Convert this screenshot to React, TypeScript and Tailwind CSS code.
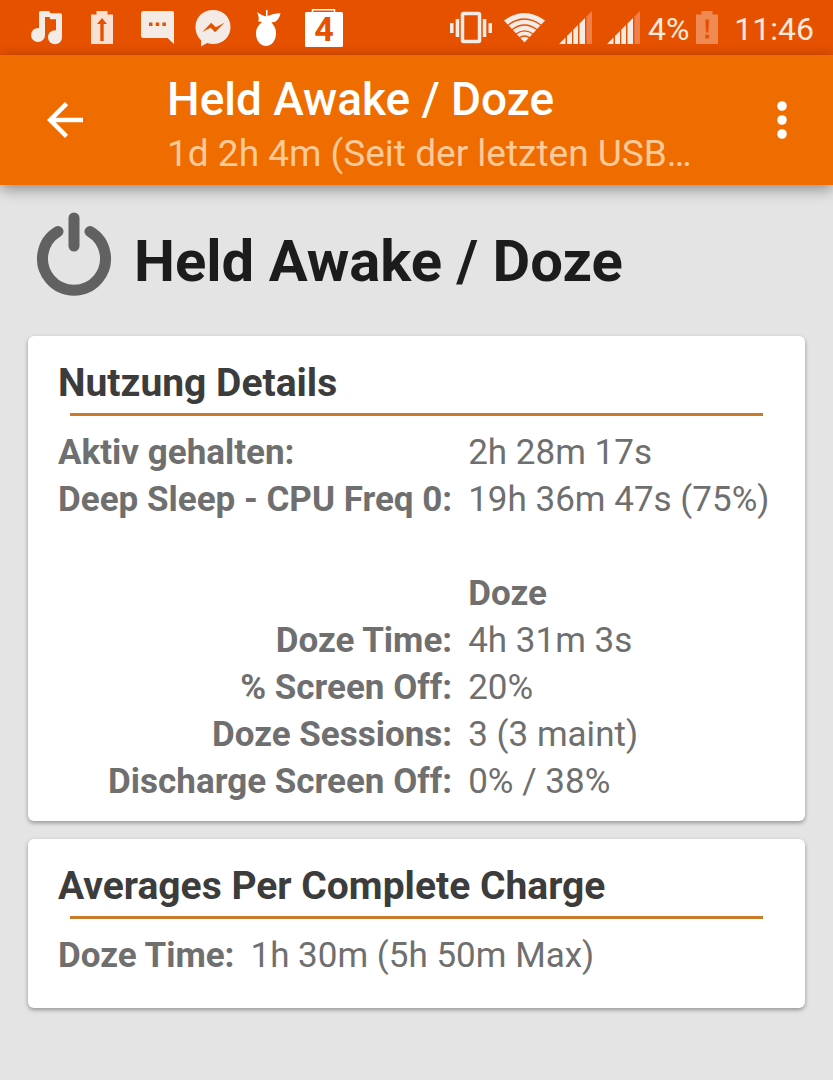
import type { ReactNode } from "react";
import clsx from "clsx";

interface StatusIconProps {
  label: string;
  width: number;
  className?: string;
  children: ReactNode;
}

interface Row {
  label: string;
  value: string;
  align?: "left" | "right";
}

interface CardProps {
  title: string;
  className?: string;
  children: ReactNode;
}

const usageRows: Row[] = [
  { label: "Aktiv gehalten:", value: "2h 28m 17s" },
  { label: "Deep Sleep - CPU Freq 0:", value: "19h 36m 47s (75%)" },
];

const dozeRows: Row[] = [
  { label: "Doze Time:", value: "4h 31m 3s", align: "right" },
  { label: "% Screen Off:", value: "20%", align: "right" },
  { label: "Doze Sessions:", value: "3 (3 maint)", align: "right" },
  { label: "Discharge Screen Off:", value: "0% / 38%", align: "right" },
];

const averageRows: Row[] = [{ label: "Doze Time:", value: "1h 30m (5h 50m Max)" }];

// Every status icon is as tall as the bar, so the drawings share one vertical scale.
function StatusIcon({ label, width, className, children }: StatusIconProps) {
  return (
    <svg
      role="img"
      aria-label={label}
      width={width}
      height="55"
      viewBox={`0 0 ${width} 55`}
      fill="#f5ebe6"
      className={className}
    >
      {children}
    </svg>
  );
}

function SignalIcon() {
  return (
    <StatusIcon label="Signal" width={33}>
      <path d="M27.500 16.500 33 11v33h-5.500z" fill="#f0804a" />
      <path d="M0 44 6.500 37.500V44zM8 36l5-5v13H8zM14.300 29.700l4.700-4.700v19h-4.700zM20.500 23.500l5.500-5.500v26h-5.500z" />
    </StatusIcon>
  );
}

function StatusBar() {
  return (
    <div className="flex h-[55px] items-center justify-between bg-[#e65100] pr-[19px] pl-[31px]">
      <div className="flex items-center">
        <StatusIcon label="Music" width={31}>
          <circle cx="7" cy="35" r="7" />
          <circle cx="24" cy="37.300" r="7" />
          <path d="M8 12.500Q8 11 9.500 11h8Q19 11 19 12.500l.5.800h10Q31 13.300 31 15v22h-6V19.300h-5.500L18.500 17H14v18H8z" />
        </StatusIcon>
        <StatusIcon label="Battery" width={22} className="ml-[29px]">
          <path d="M0 14.500h5.500V11h11v3.500H22V44H0z" fill="#fae0d2" />
          <path d="M11 18l5 6h-3.300v17H9.300V24H6z" fill="#e65100" />
        </StatusIcon>
        <StatusIcon label="Message" width={33} className="ml-[28px]">
          <path d="M2.500 11H31q2 0 2 2v31l-6.500-6H2.500Q0 38 0 35.500v-22Q0 11 2.500 11z" />
          <path d="M8 22.500h3.500V26H8zM14.700 22.500h3.500V26h-3.500zM21.400 22.500h3.500V26h-3.500z" fill="#e65100" />
        </StatusIcon>
        <StatusIcon label="Messenger" width={36} className="ml-[21px]">
          <path d="M18 10c10 0 17.500 7.300 17.500 17S28 44 18 44c-2 0-4-.3-5.800-.9L6 46.500v-6.300C2.500 37 .5 32.500 .5 27 .5 17.300 8 10 18 10z" />
          <path d="M7.300 32l8.900-9.200 4.600 4.500 8.600-4.500-9.300 9.500-4.500-4.600z" fill="#e65100" />
        </StatusIcon>
        <StatusIcon label="Doze" width={25} className="ml-[25px]">
          <g fill="#fff">
            <path d="M1 12q3.500 3 9 4.500V10h1.500v6Q17 13.500 24.500 13q-1 6-5.500 9-4 .3-7 .3L2 21.500Q4 19 1 12z" />
            <path d="M7 20h7.500q.5 2 2.500 4.500 3 3.500 3 9C20 40.500 15.500 46 10 46S0 40.500 0 33.500q0-5.500 3.500-9Q6.500 22 7 20z" />
          </g>
        </StatusIcon>
        <span className="relative ml-[24px] flex items-center justify-center">
          <StatusIcon label="Calendar" width={38}>
            <path d="M7.500 13V9.700h22V13" fill="none" stroke="#fff" strokeWidth="1.500" />
            <rect y="12" width="38" height="35" rx="1.500" fill="#fff" />
          </StatusIcon>
          <span className="absolute pt-[3px] text-[34px] leading-none font-bold text-[#e65100]">4</span>
        </span>
      </div>

      <div className="flex items-center text-[32px] leading-none text-[#ffe9dc]">
        <StatusIcon label="Vibrate" width={42}>
          <path d="M0 23h3.500v10H0zM5.700 19h3.500v18H5.700zM32.800 19h3.500v18h-3.500zM38.500 23H42v10h-3.500z" />
          <rect x="12.500" y="13.500" width="17" height="28" rx="1" fill="none" stroke="#f5ebe6" strokeWidth="3.500" />
        </StatusIcon>
        <StatusIcon label="Wi-Fi" width={41} className="ml-[12px]">
          <path d="M20.500 42.500 0 20.500Q20.500 5.500 41 20.500z" />
          <path
            d="M3.500 25.500Q20.500 12.500 37.500 25.500M7.500 30Q20.500 20 33.500 30M11.500 34.300Q20.500 27.500 29.500 34.300M15 38Q20.500 34 26 38"
            fill="none"
            stroke="#e65100"
            strokeWidth="1.300"
          />
        </StatusIcon>
        <div className="ml-[14px] flex gap-[15px]">
          <SignalIcon />
          <SignalIcon />
        </div>
        <span className="ml-2 pt-[3px]">4%</span>
        <StatusIcon label="Battery low" width={22} className="ml-[7px]">
          <path d="M0 14.500h5.500V11h11v3.500H22V44H0z" fill="#f08a55" />
          <path d="M9.300 19.500h3.700l-.6 13H9.900zM9.300 34.700h3.700v3.700H9.300z" fill="#e65100" />
        </StatusIcon>
        <span className="ml-4 pt-[3px]">11:46</span>
      </div>
    </div>
  );
}

function Toolbar() {
  return (
    <header className="relative flex h-[130px] items-center bg-[#ef6c00] pr-[24px] pl-[38px] shadow-[0_4px_14px_rgba(0,0,0,0.4)]">
      <button type="button" aria-label="Zurück" className="shrink-0">
        <svg width="54" height="54" viewBox="0 0 24 24" fill="#fff">
          <path d="M20 11H7.830l5.590-5.590L12 4l-8 8 8 8 1.410-1.410L7.830 13H20v-2z" />
        </svg>
      </button>
      <div className="ml-[75px] min-w-0 flex-1 pt-[11px]">
        <div className="text-[46px] leading-[56px] font-medium text-white">Held Awake / Doze</div>
        <div className="text-[37px] leading-[54px] text-[#ffca99]">1d 2h 4m (Seit der letzten USB…</div>
      </div>
      <button type="button" aria-label="Weitere Optionen" className="shrink-0">
        <svg width="54" height="54" viewBox="0 0 54 54" fill="#fff">
          <circle cx="27" cy="13" r="4.800" />
          <circle cx="27" cy="27" r="4.800" />
          <circle cx="27" cy="41" r="4.800" />
        </svg>
      </button>
    </header>
  );
}

function PowerIcon() {
  return (
    <svg width="76" height="86" viewBox="0 0 76 86" fill="none" stroke="#616161" strokeWidth="11" strokeLinecap="round" aria-hidden="true">
      <path d="M22 20.500A31.500 31.500 0 1 0 54 20.500" />
      <path d="M38 7v28" />
    </svg>
  );
}

function TableRow({ label, value, align = "left" }: Row) {
  return (
    <tr className="h-[47px]">
      <th scope="row" className={clsx("pr-4 font-bold whitespace-nowrap", align === "right" ? "text-right" : "text-left")}>
        {label}
      </th>
      <td className="whitespace-nowrap">{value}</td>
    </tr>
  );
}

function Card({ title, className, children }: CardProps) {
  return (
    <section className={clsx("rounded-md bg-white px-[30px] pt-6 shadow-[0_2px_4px_rgba(0,0,0,0.35)]", className)}>
      <h2 className="text-[39px] leading-[46px] font-bold text-[#3c3c3c]">{title}</h2>
      <div className="mx-3 mt-[7px] mb-[13px] h-[3px] bg-[#cb7a2c]" />
      <table className="text-[35px] leading-[47px] text-[#6f6f6f]">
        <tbody>{children}</tbody>
      </table>
    </section>
  );
}

export default function App() {
  return (
    <div className="min-h-screen bg-[#e4e4e4] font-['Roboto',sans-serif]">
      <StatusBar />
      <Toolbar />
      <main className="px-7">
        <div className="flex items-center gap-[22px] px-2 pt-[26px] pb-[39px]">
          <PowerIcon />
          <h1 className="pt-[14px] text-[58px] leading-[72px] font-bold text-[#1c1c1c]">Held Awake / Doze</h1>
        </div>
        <div className="flex flex-col gap-[18px]">
          <Card title="Nutzung Details" className="pb-4">
            {usageRows.map((row) => (
              <TableRow key={row.label} {...row} />
            ))}
            <tr className="h-[47px]">
              <td colSpan={2} />
            </tr>
            <tr className="h-[47px]">
              <td />
              <th scope="col" className="text-left font-bold">
                Doze
              </th>
            </tr>
            {dozeRows.map((row) => (
              <TableRow key={row.label} {...row} />
            ))}
          </Card>
          <Card title="Averages Per Complete Charge" className="pb-[29px]">
            {averageRows.map((row) => (
              <TableRow key={row.label} {...row} />
            ))}
          </Card>
        </div>
      </main>
    </div>
  );
}
